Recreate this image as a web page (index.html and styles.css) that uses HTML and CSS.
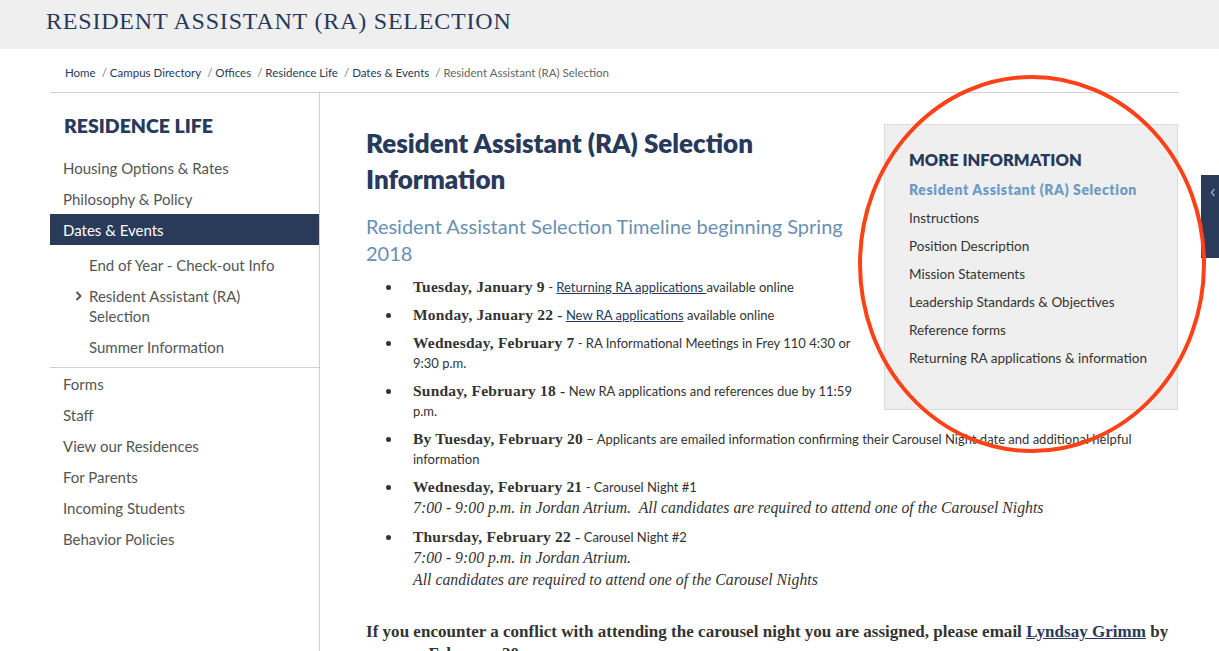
FILE: index.html
```html
<!DOCTYPE html>
<html lang="en">
<head>
<meta charset="utf-8">
<title>Resident Assistant (RA) Selection</title>
<link rel="stylesheet" href="styles.css">
</head>
<body>
<header class="page-header">
  <div class="page-title">RESIDENT ASSISTANT (RA) SELECTION</div>
</header>
<div class="wrap">
  <nav class="crumbs">
    <a href="#">Home</a><span class="sep">/</span><a href="#">Campus Directory</a><span class="sep">/</span><a href="#">Offices</a><span class="sep">/</span><a href="#">Residence Life</a><span class="sep">/</span><a href="#">Dates &amp; Events</a><span class="sep">/</span><span class="current">Resident Assistant (RA) Selection</span>
  </nav>
  <div class="layout">
    <aside class="sidebar">
      <h2 class="side-title">RESIDENCE LIFE</h2>
      <ul class="side-nav">
        <li><a href="#">Housing Options &amp; Rates</a></li>
        <li><a href="#">Philosophy &amp; Policy</a></li>
        <li class="active"><a href="#">Dates &amp; Events</a></li>
      </ul>
      <ul class="sub-nav">
        <li><a href="#">End of Year - Check-out Info</a></li>
        <li class="current"><svg class="chev" width="8" height="10" viewBox="0 0 8 10" aria-hidden="true"><path d="M1.5 1 L5.5 5 L1.5 9" fill="none" stroke="#555" stroke-width="2"/></svg><a href="#">Resident Assistant (RA) Selection</a></li>
        <li><a href="#">Summer Information</a></li>
      </ul>
      <ul class="side-nav lower">
        <li><a href="#">Forms</a></li>
        <li><a href="#">Staff</a></li>
        <li><a href="#">View our Residences</a></li>
        <li><a href="#">For Parents</a></li>
        <li><a href="#">Incoming Students</a></li>
        <li><a href="#">Behavior Policies</a></li>
      </ul>
    </aside>
    <main class="main">
      <aside class="more-info">
        <h3 class="more-title">MORE INFORMATION</h3>
        <ul class="more-list">
          <li class="on"><a href="#">Resident Assistant (RA) Selection</a></li>
          <li><a href="#">Instructions</a></li>
          <li><a href="#">Position Description</a></li>
          <li><a href="#">Mission Statements</a></li>
          <li><a href="#">Leadership Standards &amp; Objectives</a></li>
          <li><a href="#">Reference forms</a></li>
          <li><a href="#">Returning RA applications &amp; information</a></li>
        </ul>
      </aside>
      <h1 class="h1">Resident Assistant (RA) Selection Information</h1>
      <h2 class="h2">Resident Assistant Selection Timeline beginning Spring 2018</h2>
      <ul class="timeline">
        <li><b>Tuesday, January 9</b> - <a href="#">Returning RA applications </a>available online</li>
        <li><b>Monday, January 22 -</b> <a href="#">New RA applications</a> available online</li>
        <li><b>Wednesday, February 7</b> - RA Informational Meetings in Frey 110 4:30 or 9:30 p.m.</li>
        <li><b>Sunday, February 18 -</b> New RA applications and references due by 11:59 p.m.</li>
        <li><b>By Tuesday, February 20</b> – Applicants are emailed information confirming their Carousel Night date and additional helpful information</li>
        <li><b>Wednesday, February 21</b> - Carousel Night #1<br><i>7:00 - 9:00 p.m. in Jordan Atrium.&nbsp; All candidates are required to attend one of the Carousel Nights</i></li>
        <li><b>Thursday, February 22 -</b> Carousel Night #2<br><i>7:00 - 9:00 p.m. in Jordan Atrium.</i><br><i>All candidates are required to attend one of the Carousel Nights</i></li>
      </ul>
      <p class="note">If you encounter a conflict with attending the carousel night you are assigned, please email <a href="#">Lyndsay Grimm</a> by noon on February 20.</p>
    </main>
  </div>
</div>
<div class="side-tab"><svg width="6" height="9" viewBox="0 0 6 9" aria-hidden="true"><path d="M4.5 1 L1.5 4.5 L4.5 8" fill="none" stroke="#7aa6d0" stroke-width="1.6"/></svg></div>
<svg class="circle" width="360" height="392" viewBox="0 0 360 392" aria-hidden="true">
  <ellipse cx="176" cy="190" rx="172" ry="187" fill="none" stroke="#ff4117" stroke-width="4"/>
</svg>
</body>
</html>
```
FILE: styles.css
```css
* { box-sizing: border-box; }
html, body { margin: 0; padding: 0; }
body {
  background: #fff;
  font-family: "Lato", "Open Sans", sans-serif;
  color: #333;
  overflow: hidden;
}
a { color: inherit; text-decoration: none; }
ul { list-style: none; margin: 0; padding: 0; }
h1, h2, h3, p { margin: 0; }

.page-header {
  background: #efefef;
  height: 49px;
  padding-left: 46px;
  display: flex;
  align-items: center;
}
.page-title {
  font-family: "Liberation Serif", serif;
  font-size: 24px;
  letter-spacing: 0.8px;
  color: #283a5b;
  padding-bottom: 6px;
}

.wrap { margin: 0 41px 0 50px; }
.crumbs {
  height: 44px;
  padding: 17px 0 0 15px;
  font-size: 11.5px;
  color: #283a5b;
  border-bottom: 1px solid #cfcfcf;
}
.crumbs .sep { color: #777; margin: 0 3px 0 6px; }
.crumbs .current { color: #666; }

.layout { display: flex; }
.sidebar {
  width: 270px;
  flex: none;
  border-right: 1px solid #cfcfcf;
  padding-top: 20px;
  min-height: 560px;
}
.side-title {
  font-size: 19.5px;
  line-height: 26px;
  font-weight: 800;
  color: #283a5b;
  padding-left: 14px;
  margin-bottom: 13px;
}
.side-nav li a {
  display: block;
  padding: 5.5px 13px;
  line-height: 20px;
  font-size: 15px;
  color: #555;
}
.side-nav li.active a { background: #2a3b5a; color: #fff; }
.sub-nav {
  padding: 4px 0 5px;
  border-bottom: 1px solid #cfcfcf;
}
.sub-nav li {
  padding: 5.5px 30px 5.5px 39px;
  line-height: 20px;
  font-size: 15px;
  color: #555;
  position: relative;
}
.sub-nav .chev {
  position: absolute;
  left: 25px;
  top: 11px;
}

.main {
  flex: 1;
  padding: 32px 0 0 46px;
  color: #333;
}
.more-info {
  float: right;
  width: 294px;
  height: 286px;
  margin: -1px 0 0 25px;
  background: #efefef;
  border: 1px solid #dcdcdc;
  padding: 24px 16px 0 24px;
}
.more-title {
  font-size: 16.5px;
  line-height: 22px;
  font-weight: 800;
  color: #283a5b;
  margin-bottom: 5px;
}
.more-list li { font-size: 13.5px; line-height: 28px; color: #333; }
.more-list li.on { font-weight: 800; color: #6c9bc6; font-size: 14px; letter-spacing: 0.6px; }

.h1 {
  font-size: 26px;
  line-height: 36px;
  font-weight: 800;
  color: #283a5b;
  width: 420px;
}
.h2 {
  margin-top: 16px;
  font-size: 20px;
  line-height: 27px;
  font-weight: 400;
  color: #6a8fb3;
}
.timeline {
  margin-top: 10px;
  padding-left: 47px;
}
.timeline li {
  position: relative;
  font-size: 13px;
  line-height: 20px;
  margin-bottom: 8px;
  color: #333;
}
.timeline li::before {
  content: "";
  position: absolute;
  left: -27px;
  top: 8px;
  width: 5px;
  height: 5px;
  border-radius: 50%;
  background: #333;
}
.timeline b {
  font-family: "Liberation Serif", serif;
  font-size: 15.5px;
  letter-spacing: 0.2px;
  font-weight: 700;
  color: #333;
}
.timeline a { text-decoration: underline; color: #283a5b; }
.timeline i {
  font-family: "Liberation Serif", serif;
  font-size: 15.8px;
  line-height: 22px;
}
.note {
  margin-top: 30px;
  font-family: "Liberation Serif", serif;
  font-weight: 700;
  font-size: 17px;
  letter-spacing: 0.02px;
  line-height: 22px;
  color: #333;
}
.note a { text-decoration: underline; color: #283a5b; }

.side-tab {
  position: absolute;
  left: 1201px;
  top: 175px;
  width: 30px;
  height: 83px;
  background: #2a3b5a;
  padding: 13px 0 0 9px;
  line-height: 0;
}
.circle {
  position: absolute;
  left: 856px;
  top: 74px;
  pointer-events: none;
}
```
